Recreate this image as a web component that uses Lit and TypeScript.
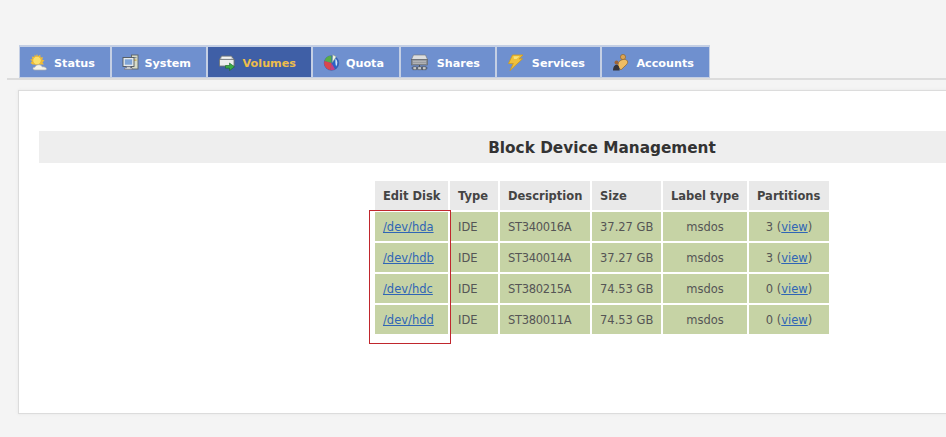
import { LitElement, html, css, svg } from "lit";
import { customElement } from "lit/decorators.js";

const icons: Record<string, unknown> = {
  status: svg`<path d="M7 0l1 2.200L10.300.8l.2 2.600 2.600-.2-1 2.400 2.400.9-2 1.700 1.400 2.200H2.500L.6 9l1.600-1.900L0 5.800l2.500-.8-.7-2.500 2.500.4L4.800.4 6 2.200z" fill="#f2bd34"/><circle cx="7" cy="6.500" r="4.200" fill="#fbe06a" stroke="#e3a828" stroke-width=".6"/><path d="M5 16c-1.500 0-2.200-.7-2-1.700.2-.8 1-1.200 1.800-1 .6-1.700 2.600-3 4.700-2.500 1.400.3 2.200 1.100 2.600 2 2-.2 4.400.6 4.400 2 0 .8-.5 1.200-1.300 1.200z" fill="#f5f3e8" stroke="#a9acb0" stroke-width=".7"/>`,
  system: svg`<rect x="9.500" y="1" width="6.500" height="14" fill="#d8dcc8" stroke="#5e6468" stroke-width=".9"/><rect x="11" y="3" width="3.500" height="1.200" fill="#8a9298"/><rect x="11" y="5.500" width="3.500" height="1.200" fill="#c9a83c"/><rect x="1" y="3.500" width="11" height="9" fill="#e6eaec" stroke="#4f575c" stroke-width=".9"/><rect x="2.800" y="5.300" width="7.400" height="5.400" fill="#7fa4d6"/><path d="M4.500 12.500h4v1.500h2v1.500H2.500V14h2z" fill="#c6cbce" stroke="#667" stroke-width=".5"/>`,
  volumes: svg`<path d="M1.500 5.500 3.500 2h10l2.500 3.500v6.500H1.500z" fill="#cfd2d4" stroke="#6c7276" stroke-width=".8"/><rect x="1.500" y="5.500" width="14.500" height="6.500" fill="#eceded" stroke="#6c7276" stroke-width=".8"/><rect x="4" y="3" width="9" height="1.600" fill="#f4f4f2"/><path d="M7.500 11.500h4V9l5 3.800-5 3.800v-2.400h-4z" fill="#3bab47" stroke="#1c6a2a" stroke-width=".6"/>`,
  quota: svg`<circle cx="8.500" cy="9" r="7.300" fill="#2c62c4" stroke="#3d5690" stroke-width=".5"/><path d="M8.500 9V1.700A7.300 7.300 0 0 0 1.500 7z" fill="#59ad46"/><path d="M8.500 9 1.500 7A7.300 7.300 0 0 0 7.500 16.300z" fill="#d9474c"/><path d="M8.500 9 7.500 16.300a7.300 7.300 0 0 0 4.500-1z" fill="#c43f85"/><path d="M9.300 8.500 9.800.8l3.400 2z" fill="#f3f5ee" stroke="#8aa27a" stroke-width=".5"/><path d="M12.500 4.500c2.200 2 2.500 5.300.6 8-.8-2.500-.9-5.500-.6-8z" fill="#cfe4f6"/>`,
  shares: svg`<path d="M2.500 1h12l2 4.500H.5z" fill="#dcdedf" stroke="#777" stroke-width=".6"/><rect x=".5" y="5.500" width="16" height="5.500" fill="#8b8f93" stroke="#5f6366" stroke-width=".6"/><path d="M2 7.200h13M2 9.200h13" stroke="#cfd1d3" stroke-width=".8"/><path d="M8.500 11v2M.5 14h16" stroke="#3f4347" stroke-width=".8"/><rect x="2" y="12.800" width="3.500" height="3" fill="#c4c7ca" stroke="#44484c" stroke-width=".6"/><rect x="6.800" y="12.800" width="3.500" height="3" fill="#c4c7ca" stroke="#44484c" stroke-width=".6"/><rect x="11.500" y="12.800" width="3.500" height="3" fill="#c4c7ca" stroke="#44484c" stroke-width=".6"/>`,
  services: svg`<path d="M5.500 1H16l-4 3.800h3.500L3 16.500 6.300 9.500H1.500z" fill="#f0c03a" stroke="#cf9a1e" stroke-width=".8"/><path d="M6.500 2.200h6L9.500 5H7z" fill="#f9e27a"/>`,
  accounts: svg`<circle cx="11" cy="3" r="2.600" fill="#dca453" stroke="#8d5f22" stroke-width=".6"/><path d="M6.500 8.500c1.500-2.500 5.500-4 8-2.500 1.800 1.200 1.500 3-.2 4.800L9 15.800 5.500 12.800z" fill="#efbd63" stroke="#96641f" stroke-width=".7"/><circle cx="4.500" cy="8.500" r="2" fill="#9d6438"/><path d="M1 16.500c0-3.500 1.500-5.800 3.600-5.800s3 2.300 3 5.800z" fill="#34343c"/>`,
};

const tabs = [
  { key: "status", label: "Status", width: 90 },
  { key: "system", label: "System", width: 94 },
  { key: "volumes", label: "Volumes", width: 103, active: true },
  { key: "quota", label: "Quota", width: 86 },
  { key: "shares", label: "Shares", width: 94 },
  { key: "services", label: "Services", width: 103 },
  { key: "accounts", label: "Accounts", width: 107 },
];

const disks = [
  ["/dev/hda", "ST340016A", "37.27 GB", "3"],
  ["/dev/hdb", "ST340014A", "37.27 GB", "3"],
  ["/dev/hdc", "ST380215A", "74.53 GB", "0"],
  ["/dev/hdd", "ST380011A", "74.53 GB", "0"],
];

@customElement("app-root")
export class AppRoot extends LitElement {
  static styles = css`
    :host {
      display: block;
      width: 946px;
      height: 437px;
      overflow: hidden;
      background: #f4f4f4;
      font-family: "DejaVu Sans", Verdana, sans-serif;
      font-size: 11.5px;
      color: #444;
    }
    .nav {
      margin-left: 7px;
      padding: 45px 0 0 12px;
      height: 33px;
      border-bottom: 2px solid #dcdcdc;
      display: flex;
      width: 1200px;
    }
    .tab {
      box-sizing: border-box;
      height: 33px;
      padding: 2px 15px 0 10px;
      background: #6f90cf;
      border: solid #c4cfe4;
      border-width: 2px 1px 1px 1px;
      display: flex;
      align-items: center;
      justify-content: space-between;
      color: #fff;
      font-weight: 700;
      font-size: 11.2px;
    }
    .tab.active {
      background: #3f5fa6;
      color: #edbd4c;
    }
    .tab svg { width: 17px; height: 17px; flex: none; margin-top: -2px; }
    .panel {
      box-sizing: border-box;
      position: relative;
      margin: 10px 0 0 18px;
      width: 1168px;
      height: 324px;
      background: #fff;
      border: 1px solid #dcdcdc;
      padding: 40px 20px 0;
      box-shadow: 0 0 3px #e6e6e6;
    }
    h1 {
      margin: 0;
      height: 32px;
      padding-top: 2px;
      box-sizing: border-box;
      line-height: 30px;
      background: #eee;
      color: #333;
      text-align: center;
      font-size: 15.3px;
      font-weight: 700;
    }
    table {
      border-collapse: separate;
      border-spacing: 2px;
      margin: 16px auto 0;
      table-layout: fixed;
      font-size: 11.5px;
    }
    th, td {
      height: 29px;
      padding: 1px 0 0 8px;
      box-sizing: border-box;
    }
    th {
      background: #e9e9e9;
      color: #444;
      text-align: left;
      font-weight: 700;
    }
    td {
      background: #c6d3a5;
      color: #555;
    }
    td.model { letter-spacing: -0.3px; }
    td.c { text-align: center; padding-left: 0; }
    a { color: #2f65b5; text-decoration: underline; }
    .mark {
      position: absolute;
      box-sizing: border-box;
      left: 350px;
      top: 119px;
      width: 82px;
      height: 134px;
      border: 1px solid #c0272d;
      pointer-events: none;
    }
  `;

  render() {
    return html`
      <div class="nav">
        ${tabs.map(
          (t) => html`<div class="tab ${t.active ? "active" : ""}" style="width:${t.width + 2}px">
            <svg viewBox="0 0 17 17">${icons[t.key]}</svg><span>${t.label}</span>
          </div>`
        )}
      </div>
      <div class="panel">
        <h1>Block Device Management</h1>
        <table>
          <colgroup>
            <col style="width:73px" /><col style="width:48px" /><col style="width:90px" />
            <col style="width:69px" /><col style="width:84px" /><col style="width:80px" />
          </colgroup>
          <tr>
            <th>Edit Disk</th><th>Type</th><th>Description</th><th>Size</th><th>Label type</th><th>Partitions</th>
          </tr>
          ${disks.map(
            (d) => html`<tr>
              <td><a href="#">${d[0]}</a></td>
              <td>IDE</td>
              <td class="model">${d[1]}</td>
              <td>${d[2]}</td>
              <td class="c">msdos</td>
              <td class="c">${d[3]} (<a href="#">view</a>)</td>
            </tr>`
          )}
        </table>
        <div class="mark"></div>
      </div>
    `;
  }
}
